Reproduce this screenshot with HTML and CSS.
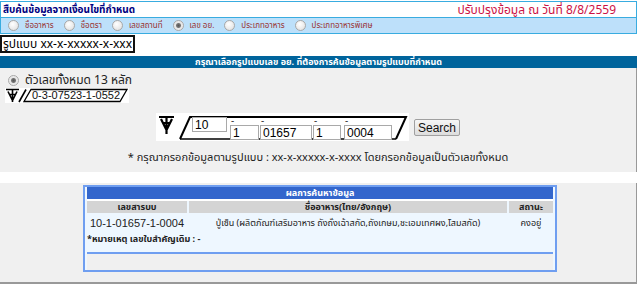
FILE: index.html
```html
<!DOCTYPE html>
<html lang="th">
<head>
    <meta charset="UTF-8">
    <meta name="viewport" content="width=device-width, initial-scale=1.0">
    <title>สืบค้นข้อมูลจากเงื่อนไขที่กำหนด</title>
    <link rel="stylesheet" href="styles.css">
</head>
<body>
    <div class="top">
        <div class="title-row">
            <span class="title">สืบค้นข้อมูลจากเงื่อนไขที่กำหนด</span>
            <span class="updated">ปรับปรุงข้อมูล ณ วันที่ 8/8/2559</span>
        </div>
        <div class="type-row">
            <label class="type"><input type="radio" name="type"> ชื่ออาหาร</label>
            <label class="type"><input type="radio" name="type"> ชื่อตรา</label>
            <label class="type"><input type="radio" name="type"> เลขสถานที่</label>
            <label class="type"><input type="radio" name="type" checked> เลข อย.</label>
            <label class="type"><input type="radio" name="type"> ประเภทอาหาร</label>
            <label class="type"><input type="radio" name="type"> ประเภทอาหารพิเศษ</label>
        </div>
    </div>

    <div class="format">รูปแบบ xx-x-xxxxx-x-xxx</div>

    <div class="bar">กรุณาเลือกรูปแบบเลข อย. ที่ต้องการค้นข้อมูลตามรูปแบบที่กำหนด</div>

    <div class="panel">
        <label class="opt"><input type="radio" name="fmt" checked> ตัวเลขทั้งหมด 13 หลัก</label>
        <div class="sample">
            <svg class="frame" width="124" height="15" viewBox="0 0 124 15">
                <path d="M1 1.5H14M3 3.5L7.5 12.5L12 3.5M7.5 1.5V14M5 6.5H10" fill="none" stroke="#000" stroke-width="1.6"/>
                <path d="M14 14L21 1.5" fill="none" stroke="#000" stroke-width="1.6"/>
                <path d="M19 13.5L26 1.5H122L115 13.5Z" fill="none" stroke="#000" stroke-width="1.3"/>
            </svg>
            <span class="sample-no">0-3-07523-1-0552</span>
        </div>

        <div class="entry">
            <div class="entry-box">
                <svg class="frame" width="253" height="28" viewBox="0 0 253 28">
                    <path d="M3 4H18M5 6L10.5 17L16 6M10.5 4V21M7.5 10H13.5" fill="none" stroke="#000" stroke-width="2.2"/>
                    <path d="M24 26L34 4H250L240 26" fill="none" stroke="#000" stroke-width="2"/>
                    <path d="M24 26H240" fill="none" stroke="#000" stroke-width="1.5"/>
                </svg>
                <div class="fields">
                    <input class="f f-first" type="text" value="10">
                    <div class="grp"><span class="dash">-</span><input class="f w1" type="text" value="1"></div>
                    <div class="grp"><span class="dash">-</span><input class="f w5" type="text" value="01657"></div>
                    <div class="grp"><span class="dash">-</span><input class="f w1b" type="text" value="1"></div>
                    <div class="grp"><span class="dash">-</span><input class="f w4" type="text" value="0004"></div>
                </div>
            </div>
            <button class="search">Search</button>
        </div>

        <p class="hint">* กรุณากรอกข้อมูลตามรูปแบบ : xx-x-xxxxx-x-xxxx โดยกรอกข้อมูลเป็นตัวเลขทั้งหมด</p>
    </div>

    <div class="results-wrap">
        <table class="results">
            <tr><th class="caption" colspan="3">ผลการค้นหาข้อมูล</th></tr>
            <tr class="head">
                <th class="c1">เลขสารบบ</th>
                <th>ชื่ออาหาร(ไทย/อังกฤษ)</th>
                <th class="c3">สถานะ</th>
            </tr>
            <tr class="row">
                <td class="num">10-1-01657-1-0004</td>
                <td class="name">ปู่เซ็น (ผลิตภัณฑ์เสริมอาหาร ถังถั่งเฉ้าสกัด,ถังเกษม,ชะเอมเทศผง,โสมสกัด)</td>
                <td class="status">คงอยู่</td>
            </tr>
            <tr class="row">
                <td class="note" colspan="3">*หมายเหตุ เลขใบสำคัญเดิม : -</td>
            </tr>
            <tr class="foot"><td colspan="3"></td></tr>
        </table>
    </div>
</body>
</html>
```

FILE: styles.css
```css
body {
    margin: 0;
    font-family: Tahoma, "Noto Sans Thai", "Liberation Sans", sans-serif;
    font-size: 12px;
    color: #222;
    background: #ffffff;
    width: 637px;
}

input[type="radio"] {
    appearance: none;
    box-sizing: border-box;
    width: 11px;
    height: 11px;
    border: 1px solid #a8a8a8;
    border-radius: 50%;
    background: radial-gradient(circle at 40% 35%, #ffffff, #dcdcdc);
}

input[type="radio"]:checked {
    background: radial-gradient(circle, #555555 0, #777777 2px, #e6e6e6 3px, #f4f4f4);
}

.top {
    padding-top: 1px;
}

.title-row {
    display: flex;
    justify-content: space-between;
    align-items: center;
    height: 15px;
    border: 1px solid #39ace0;
    background: #ffffff;
    padding: 0 4px 0 2px;
}

.title {
    font-size: 10px;
    font-weight: bold;
    color: #000080;
}

.updated {
    font-size: 12px;
    color: #cc1144;
    padding-right: 16px;
}

.type-row {
    display: flex;
    align-items: center;
    height: 15px;
    border: 1px solid #39ace0;
    border-top: none;
    background: #bde0fa;
    padding-left: 4px;
}

.type {
    display: flex;
    align-items: center;
    font-size: 8px;
    color: #993333;
    margin-right: 7px;
}

.type input {
    margin: 0 6px 0 3px;
}

.format {
    display: inline-block;
    margin-top: 1px;
    border: 2px solid #111;
    padding: 0 1px;
    font-size: 12px;
    line-height: 14px;
    color: #000;
}

.bar {
    margin-top: 3px;
    height: 12px;
    line-height: 12px;
    background: #00649c;
    color: #ffffff;
    font-size: 9px;
    font-weight: bold;
    text-align: center;
}

.panel {
    background: #f0f0f0;
    border-right: 1px solid #999999;
    height: 104px;
    padding-top: 6px;
    box-sizing: border-box;
}

.opt {
    display: flex;
    align-items: center;
    margin-left: 8px;
    font-size: 12px;
    line-height: 13px;
    color: #222;
}

.opt input {
    margin: 0 6px 0 0;
}

.sample {
    position: relative;
    width: 124px;
    height: 15px;
    margin: 1px 0 0 5px;
    background: #ffffff;
}

.frame {
    position: absolute;
    left: 0;
    top: 0;
}

.sample-no {
    position: relative;
    display: block;
    padding-left: 27px;
    font-family: "Liberation Sans", Arial, sans-serif;
    font-size: 11px;
    line-height: 15px;
    color: #111;
}

.entry {
    display: flex;
    align-items: flex-start;
    margin: 10px 0 0 156px;
}

.entry-box {
    position: relative;
    width: 253px;
    height: 28px;
    background: #ffffff;
}

.fields {
    position: relative;
    display: flex;
    align-items: flex-start;
    padding: 4px 0 0 36px;
}

.grp {
    display: flex;
    flex-direction: column;
}

.dash {
    font-size: 10px;
    line-height: 8px;
    height: 8px;
    color: #333;
    padding-left: 1px;
}

.f {
    box-sizing: border-box;
    height: 15px;
    border: 1px solid #a9a9a9;
    padding: 0 2px;
    font-family: "Liberation Sans", Arial, sans-serif;
    font-size: 12px;
    color: #000;
    background: #ffffff;
    margin: 0;
}

.f-first {
    width: 35px;
    margin-right: 3px;
}

.w1 {
    width: 29px;
    margin-right: 1px;
}

.w5 {
    width: 52px;
    margin-right: 1px;
}

.w1b {
    width: 28px;
    margin-right: 3px;
}

.w4 {
    width: 48px;
}

.search {
    margin: 6px 0 0 5px;
    height: 17px;
    padding: 0 3px;
    font-family: "Liberation Sans", Arial, sans-serif;
    font-size: 12px;
    color: #111;
    border: 1px solid #a0a0a0;
    border-radius: 2px;
    background: linear-gradient(#f6f6f6, #dddddd);
}

.hint {
    margin: 8px 0 0;
    text-align: center;
    font-size: 11px;
    color: #222;
}

.results-wrap {
    margin-top: 11px;
    background: #f0f0f0;
    border-right: 1px solid #999999;
    border-bottom: 2px solid #999999;
    height: 101px;
    padding-top: 2px;
    box-sizing: border-box;
}

.results {
    margin-left: 83px;
    width: 474px;
    border: 2px solid #6f9ef0;
    border-collapse: separate;
    border-spacing: 2px 0;
    background: #eef7ff;
    font-size: 10px;
}

.results th,
.results td {
    padding: 0;
}

.caption {
    background: #3366cc;
    color: #ffffff;
    font-size: 9px;
    height: 12px;
    line-height: 12px;
    border-bottom: 2px solid #ffffff;
}

.head th {
    background: #d4d4d4;
    color: #222;
    font-size: 9px;
    height: 12px;
    line-height: 12px;
}

.c1 {
    width: 100px;
}

.c3 {
    width: 44px;
}

.row td {
    height: 16px;
    line-height: 16px;
}

.num {
    text-align: center;
    white-space: nowrap;
    font-family: "Liberation Sans", Arial, sans-serif;
    font-size: 11px;
    padding-top: 2px !important;
}

.name {
    text-align: center;
    font-size: 9px;
    padding-top: 2px !important;
}

.status {
    text-align: center;
    font-size: 9px;
    padding-top: 2px !important;
}

.note {
    font-weight: bold;
    font-size: 9px;
    padding-bottom: 5px !important;
}

.foot td {
    height: 16px;
    background: #f0f0f0;
    border-top: 2px solid #6f9ef0;
}
```
